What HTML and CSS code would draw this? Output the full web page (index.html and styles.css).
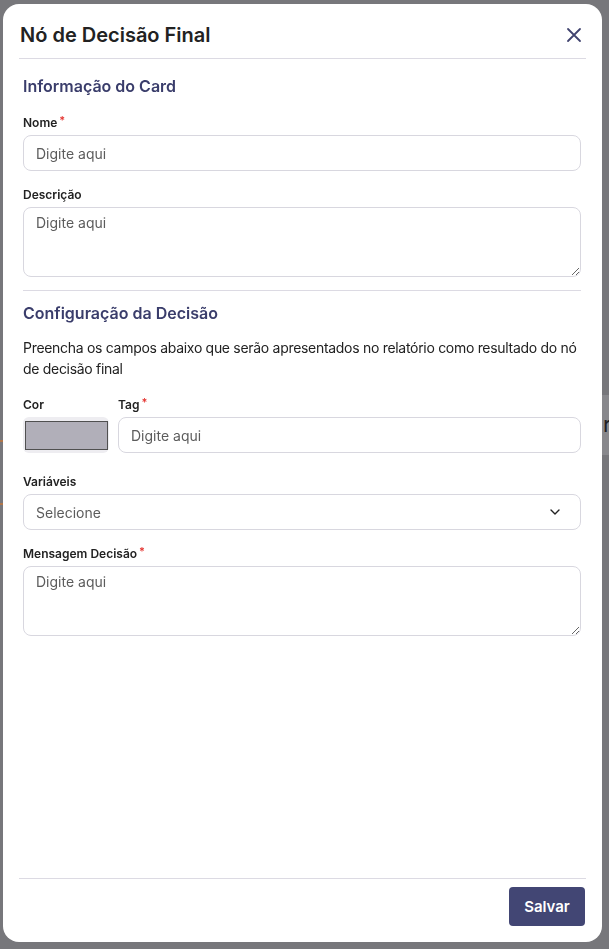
FILE: index.html
```html
<!DOCTYPE html>
<html lang="pt-BR">
<head>
    <meta charset="UTF-8">
    <meta name="viewport" content="width=device-width, initial-scale=1.0">
    <title>Nó de Decisão Final</title>
    <link rel="stylesheet" href="styles.css">
</head>
<body>

    <!-- page behind the overlay (only edges visible) -->
    <div class="behind-right">r</div>
    <div class="behind-left"></div>

    <div class="modal">
        <!-- Header -->
        <div class="modal-header">
            <h2>Nó de Decisão Final</h2>
            <button class="close-btn" aria-label="Fechar">
                <svg width="16" height="16" viewBox="0 0 16 16"><path d="M2 2 L14 14 M14 2 L2 14" stroke="#40436f" stroke-width="1.8" stroke-linecap="round"/></svg>
            </button>
        </div>

        <!-- Body -->
        <div class="modal-body">
            <h3 class="section-title">Informação do Card</h3>

            <label class="field-label" for="nome">Nome<span class="req">*</span></label>
            <input type="text" id="nome" class="field" placeholder="Digite aqui">

            <label class="field-label gap" for="descricao">Descrição</label>
            <textarea id="descricao" class="field area" placeholder="Digite aqui"></textarea>

            <hr class="divider">

            <h3 class="section-title">Configuração da Decisão</h3>
            <p class="hint">Preencha os campos abaixo que serão apresentados no relatório como resultado do nó de decisão final</p>

            <div class="row">
                <div class="col-cor">
                    <span class="field-label">Cor</span>
                    <div class="color-box"><div class="swatch"></div></div>
                </div>
                <div class="col-tag">
                    <label class="field-label" for="tag">Tag<span class="req">*</span></label>
                    <input type="text" id="tag" class="field" placeholder="Digite aqui">
                </div>
            </div>

            <label class="field-label gap-lg">Variáveis</label>
            <div class="field select">
                <span>Selecione</span>
                <svg width="10" height="6" viewBox="0 0 10 6"><path d="M1 1 L5 5 L9 1" fill="none" stroke="#222" stroke-width="1.4" stroke-linecap="round" stroke-linejoin="round"/></svg>
            </div>

            <label class="field-label gap" for="mensagem">Mensagem Decisão<span class="req">*</span></label>
            <textarea id="mensagem" class="field area" placeholder="Digite aqui"></textarea>
        </div>

        <!-- Footer -->
        <div class="modal-footer">
            <button class="btn-save">Salvar</button>
        </div>
    </div>

</body>
</html>
```

FILE: styles.css
```css
body {
    margin: 0;
    padding: 4px 7px 0 3px;
    background-color: #77777b;
    font-family: Inter, "Noto Sans", sans-serif;
    color: #222;
}

/* bits of the page under the dim overlay */
.behind-right {
    position: fixed;
    left: 598px;
    top: 395px;
    width: 40px;
    height: 60px;
    background: #88888c;
    color: #1e1e22;
    font-size: 22px;
    line-height: 58px;
    padding-left: 5px;
    box-sizing: border-box;
}

.behind-left {
    position: fixed;
    left: 0;
    top: 440px;
    width: 6px;
    height: 61px;
    border-top: 2px solid #b0764a;
    border-bottom: 2px solid #b0764a;
}

.modal {
    position: relative;
    z-index: 1;
    width: 599px;
    height: 938px;
    background-color: #fff;
    border-radius: 16px;
    display: flex;
    flex-direction: column;
    box-sizing: border-box;
}

.modal-header {
    margin: 0 16px;
    padding: 18px 0 10px 1px;
    border-bottom: 1px solid #dcdae3;
    display: flex;
    align-items: center;
    justify-content: space-between;
}

.modal-header h2 {
    margin: 0;
    font-size: 20px;
    line-height: 26px;
    font-weight: 600;
    color: #222;
}

.close-btn {
    background: none;
    border: none;
    padding: 0;
    margin-right: 4px;
    cursor: pointer;
    display: flex;
}

.modal-body {
    flex: 1;
    padding: 0 21px 0 20px;
    display: flex;
    flex-direction: column;
}

.section-title {
    margin: 17px 0 19px;
    font-size: 16px;
    line-height: 20px;
    font-weight: 600;
    color: #3a3d6b;
}

.divider + .section-title {
    margin-top: 12px;
}

.field-label {
    display: block;
    font-size: 12px;
    line-height: 16px;
    font-weight: 600;
    color: #222;
    margin-bottom: 4px;
}

.field-label.gap {
    margin-top: 16px;
}

.field-label.gap-lg {
    margin-top: 21px;
}

.req {
    color: #e53935;
    margin-left: 2px;
    font-size: 11px;
    vertical-align: top;
    position: relative;
    top: -3px;
}

.field {
    box-sizing: border-box;
    width: 100%;
    height: 36px;
    border: 1px solid #d8d7df;
    border-radius: 8px;
    padding: 0 12px;
    font-family: inherit;
    font-size: 14px;
    color: #222;
    background: #fff;
    outline: none;
}

.field::placeholder {
    color: #5c5c5c;
}

.field.area {
    height: 70px;
    padding: 6px 12px;
    resize: vertical;
    display: block;
}

.divider {
    border: none;
    border-top: 1px solid #dcdae3;
    margin: 13px 0 0;
}

.section-title + .hint {
    margin-top: -5px;
}

.hint {
    margin: 0 0 18px;
    font-size: 14px;
    line-height: 21px;
    letter-spacing: -0.3px;
    color: #222;
}

.row {
    display: flex;
    gap: 9px;
}

.col-cor {
    width: 86px;
}

.col-tag {
    flex: 1;
}

.color-box {
    height: 36px;
    background: #eeedf1;
    border-radius: 6px;
    padding: 4px 1px 3px 2px;
    box-sizing: border-box;
}

.swatch {
    height: 100%;
    background: #b1afb9;
    border: 1px solid #505050;
    box-sizing: border-box;
}

.select {
    display: flex;
    align-items: center;
    justify-content: space-between;
    padding-right: 20px;
}

.select span {
    color: #5c5c5c;
}

.modal-footer {
    margin: 0 16px;
    padding: 8px 1px 16px 0;
    border-top: 1px solid #dcdae3;
    display: flex;
    justify-content: flex-end;
}

.btn-save {
    background-color: #424674;
    color: #fff;
    border: none;
    border-radius: 4px;
    width: 76px;
    height: 39px;
    font-family: inherit;
    font-size: 15px;
    font-weight: 600;
    cursor: pointer;
}
```
